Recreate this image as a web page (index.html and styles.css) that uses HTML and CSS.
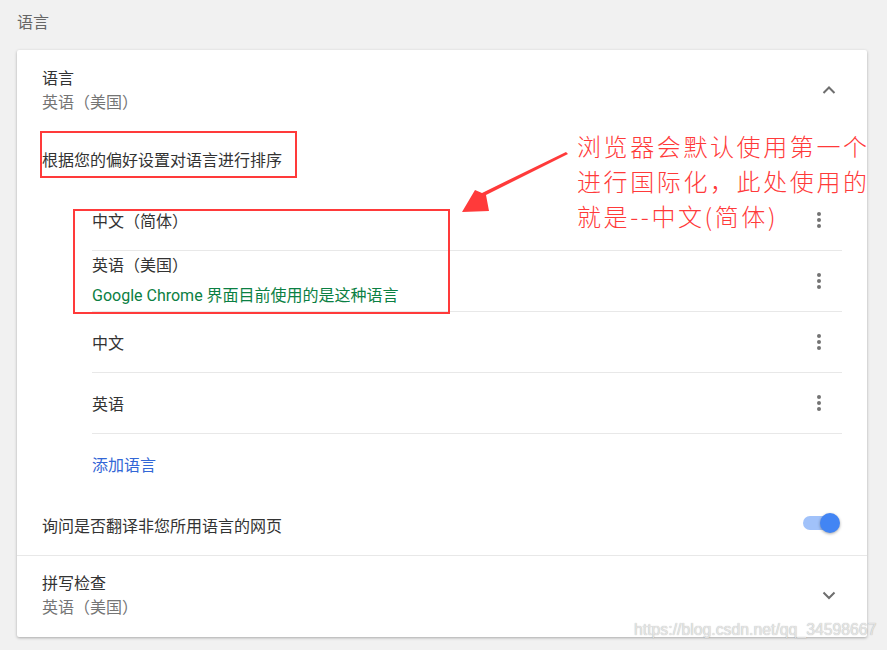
FILE: index.html
```html
<!DOCTYPE html>
<html lang="zh-CN">
<head>
	<meta charset="UTF-8">
	<title>语言设置</title>
	<link rel="stylesheet" href="styles.css">
</head>
<body>
	<div class="page">
		<div class="page-title">语言</div>
		<div class="card">
			<div class="sec-head">
				<div>
					<div class="sec-name">语言</div>
					<div class="sec-sub">英语（美国）</div>
				</div>
				<svg class="chev" width="16" height="16" viewBox="0 0 16 16"><path d="M2.5 11 L8 5.5 L13.5 11" fill="none" stroke="#6e6e6e" stroke-width="2"/></svg>
			</div>
			<div class="sort-label">根据您的偏好设置对语言进行排序</div>
			<div class="lang-list">
				<div class="lang-row">
					<div class="lang-text">中文（简体）</div>
					<span class="dots"><i></i><i></i><i></i></span>
				</div>
				<div class="lang-row">
					<div class="lang-text two">
						<div>英语（美国）</div>
						<div class="lang-note">Google Chrome 界面目前使用的是这种语言</div>
					</div>
					<span class="dots"><i></i><i></i><i></i></span>
				</div>
				<div class="lang-row">
					<div class="lang-text">中文</div>
					<span class="dots"><i></i><i></i><i></i></span>
				</div>
				<div class="lang-row">
					<div class="lang-text">英语</div>
					<span class="dots"><i></i><i></i><i></i></span>
				</div>
				<div class="lang-row last">
					<a class="add-lang">添加语言</a>
				</div>
			</div>
			<div class="toggle-row">
				<div>询问是否翻译非您所用语言的网页</div>
				<span class="toggle"><span class="knob"></span></span>
			</div>
			<div class="sec-head spell">
				<div>
					<div class="sec-name">拼写检查</div>
					<div class="sec-sub">英语（美国）</div>
				</div>
				<svg class="chev" width="16" height="16" viewBox="0 0 16 16"><path d="M2.5 5.5 L8 11 L13.5 5.5" fill="none" stroke="#6e6e6e" stroke-width="2"/></svg>
			</div>
		</div>
	</div>

	<!-- annotation drawn over the screenshot -->
	<div class="mark mark-1"></div>
	<div class="mark mark-2"></div>
	<div class="note">
		<div>浏览器会默认使用第一个</div>
		<div>进行国际化，此处使用的</div>
		<div>就是--中文(简体)</div>
	</div>
	<svg class="arrow" width="887" height="650" viewBox="0 0 887 650">
		<path d="M568 154 L486 195 L489 211 L462 212 L475 190 L482 193 L566 152 Z" fill="#ff3a3a"/>
	</svg>
	<div class="watermark">https://blog.csdn.net/qq_34598667</div>
</body>
</html>
```
FILE: styles.css
```css
html, body {
	margin: 0;
	padding: 0;
	height: 100%;
}
body {
	background-color: #f1f1f1;
	font-family: Roboto, "Noto Sans CJK SC", sans-serif;
	font-size: 16px;
	color: #333;
	position: relative;
	overflow: hidden;
}
.page {
	padding: 10px 20px 0 17px;
}
.page-title {
	color: #666;
	line-height: 26px;
	margin-bottom: 14px;
}
.card {
	background-color: #fff;
	border-radius: 2px;
	box-shadow: 0 1px 3px rgba(0,0,0,0.3);
}
.sec-head {
	display: flex;
	justify-content: space-between;
	align-items: center;
	padding: 17px 30px 0 25px;
	line-height: 24px;
}
.sec-head.spell {
	padding: 16px 30px 17px 25px;
}
.sec-sub {
	color: #757575;
}
.chev {
	margin-top: -3px;
}
.sort-label {
	padding: 0 25px;
	margin-top: 34px;
	line-height: 24px;
}
.lang-list {
	margin: 17px 25px 0 75px;
}
.lang-row {
	display: flex;
	justify-content: space-between;
	align-items: center;
	min-height: 60px;
	border-bottom: 1px solid #e8e8e8;
}
.lang-row.last {
	border-bottom: none;
}
.lang-text.two {
	line-height: 30px;
	margin-top: -1px;
}
.lang-note {
	color: #0b8043;
}
.add-lang {
	color: #3367d6;
	text-decoration: none;
}
.dots {
	width: 24px;
	margin-right: 11px;
	display: flex;
	flex-direction: column;
	align-items: center;
	gap: 2px;
}
.dots i {
	display: block;
	width: 4px;
	height: 4px;
	border-radius: 50%;
	background-color: #737373;
}
.toggle-row {
	display: flex;
	justify-content: space-between;
	align-items: center;
	height: 61px;
	padding: 0 30px 0 25px;
	border-bottom: 1px solid #e8e8e8;
}
.toggle {
	position: relative;
	width: 34px;
	height: 14px;
	margin-top: -4px;
	border-radius: 7px;
	background-color: #a1c2fa;
}
.toggle .knob {
	position: absolute;
	right: -3px;
	top: -3px;
	width: 20px;
	height: 20px;
	border-radius: 50%;
	background-color: #4285f4;
	box-shadow: 0 1px 3px rgba(0,0,0,0.35);
}
.mark {
	position: absolute;
	border: 2px solid #ff3a3a;
	box-sizing: border-box;
}
.mark-1 {
	left: 40px;
	top: 131px;
	width: 257px;
	height: 47px;
}
.mark-2 {
	left: 73px;
	top: 209px;
	width: 377px;
	height: 105px;
}
.note {
	position: absolute;
	left: 577px;
	top: 128px;
	color: #ff3a3a;
	font-family: "Noto Sans CJK SC", sans-serif;
	font-weight: 300;
	font-size: 24px;
	letter-spacing: 2.6px;
	white-space: nowrap;
}
.note div {
	line-height: 35px;
}
.arrow {
	position: absolute;
	left: 0;
	top: 0;
}
.watermark {
	position: absolute;
	left: 634px;
	top: 621px;
	font-family: "Liberation Sans", Arial, sans-serif;
	font-size: 15.8px;
	color: rgba(235,235,235,0.9);
	text-shadow: 0 0 1px rgba(0,0,0,0.35);
	white-space: nowrap;
}
```
